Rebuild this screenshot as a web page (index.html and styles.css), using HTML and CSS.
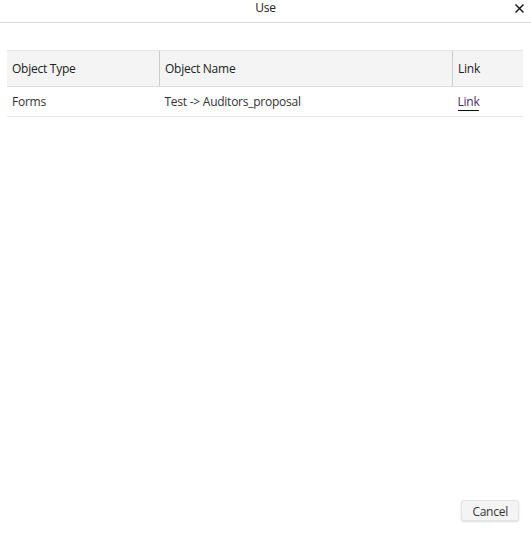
FILE: index.html
```html
<!DOCTYPE html>
<html lang="en">
<head>
    <meta charset="UTF-8">
    <title>Use</title>
    <link rel="stylesheet" href="styles.css">
</head>
<body>
    <div class="dialog">
        <div class="titlebar">
            <span class="title">Use</span>
            <svg class="close" width="9" height="9" viewBox="0 0 9 9">
                <path d="M0.5 0.5 L8.5 8.5 M8.5 0.5 L0.5 8.5" stroke="#111" stroke-width="1.4" fill="none"/>
            </svg>
        </div>

        <div class="content">
            <table class="uses">
                <thead>
                    <tr>
                        <th class="col-type">Object Type</th>
                        <th class="col-name">Object Name</th>
                        <th class="col-link">Link</th>
                    </tr>
                </thead>
                <tbody>
                    <tr>
                        <td>Forms</td>
                        <td>Test -&gt; Auditors_proposal</td>
                        <td><a href="#">Link</a></td>
                    </tr>
                </tbody>
            </table>
        </div>

        <div class="footer">
            <button type="button" class="btn">Cancel</button>
        </div>
    </div>
</body>
</html>
```

FILE: styles.css
```css
/* General */
body {
    margin: 0;
    font-family: 'Open Sans', sans-serif;
    font-size: 12px;
    letter-spacing: -0.25px;
    color: #333;
    background: #fff;
}
.dialog {
    height: 534px;
    display: flex;
    flex-direction: column;
}

/* Title bar */
.titlebar {
    height: 22px;
    border-bottom: 1px solid #ddd;
    display: flex;
    align-items: flex-start;
    justify-content: center;
    position: relative;
}
.title {
    color: #222;
    line-height: 16px;
}
.close {
    position: absolute;
    right: 7px;
    top: 4px;
}

/* Table */
.content {
    flex: 1;
    padding: 27px 8px 0 7px;
}
table.uses {
    width: 100%;
    border-collapse: collapse;
}
.uses th {
    background: #f4f4f4;
    color: #222;
    font-weight: normal;
    text-align: left;
    height: 35px;
    padding: 0 5px;
    border-top: 1px solid #e6e6e6;
    border-bottom: 1px solid #ddd;
}
.uses th + th {
    border-left: 1px solid #ccc;
}
.uses td {
    height: 29px;
    padding: 0 5px;
    border-bottom: 1px solid #e8e8e8;
}
.col-type { width: 142px; }
.col-link { width: 60px; }
.uses a {
    color: #4b2a66;
    text-decoration: none;
    border-bottom: 1px solid #111;
}

/* Footer */
.footer {
    display: flex;
    justify-content: flex-end;
    padding: 0 12px 13px 0;
}
.btn {
    font-family: 'Open Sans', sans-serif;
    font-size: 12px;
    letter-spacing: -0.25px;
    color: #333;
    background: #f4f4f4;
    border: 1px solid #e4e4e4;
    border-radius: 3px;
    box-shadow: 0 1px 2px rgba(0, 0, 0, 0.15);
    padding: 2px 10px;
    height: 21px;
}
```
